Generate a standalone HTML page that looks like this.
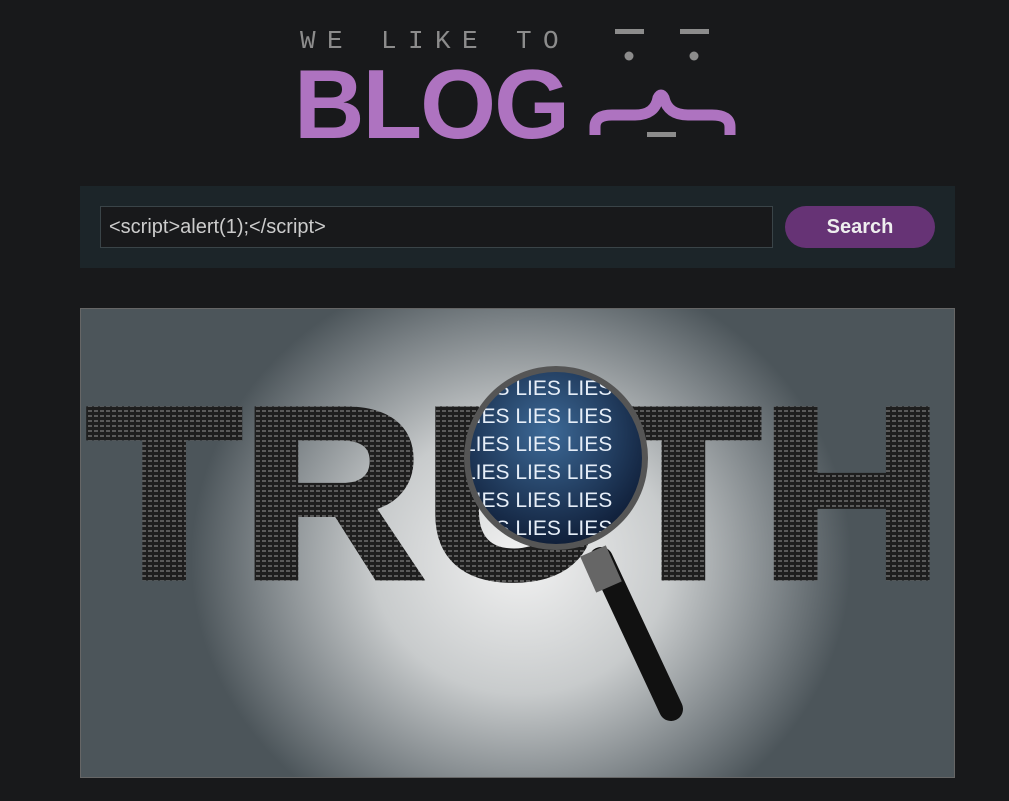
<!DOCTYPE html>
<html><head><meta charset="utf-8"><style>
html,body{margin:0;padding:0;background:#18191b;width:1009px;height:801px;overflow:hidden;font-family:"Liberation Sans",sans-serif}
.logo{position:absolute;left:0;top:0}
.bar{position:absolute;left:80px;top:186px;width:875px;height:82px;background:#1c2529}
.inp{position:absolute;left:20px;top:20px;width:673px;height:42px;background:#18191b;border:1px solid #3a4448;box-sizing:border-box;color:#ccc;font-size:20px;line-height:40px;padding-left:8px}
.btn{position:absolute;left:705px;top:20px;width:150px;height:42px;border-radius:21px;background:#663375;color:#eee;font-weight:bold;font-size:20px;text-align:center;line-height:42px}
.img{position:absolute;left:80px;top:308px;width:875px;height:470px;border:1px solid #666;box-sizing:border-box;overflow:hidden;background:radial-gradient(ellipse 330px 300px at 440px 250px,#f2f2f2 0%,#c8cbcc 45%,#7a8185 80%,#4c555a 100%)}
</style></head><body>
<svg class="logo" width="1009" height="160">
<text x="300" y="48" font-family="Liberation Mono" font-size="26" fill="#8c8c8c" letter-spacing="11.4">WE LIKE TO</text>
<text x="294" y="138" font-family="Liberation Sans" font-weight="bold" font-size="98" fill="#ae73c0" letter-spacing="-2" textLength="274" lengthAdjust="spacingAndGlyphs">BLOG</text>
<rect x="615" y="29" width="29" height="5" fill="#8c8c8c"/><rect x="680" y="29" width="29" height="5" fill="#8c8c8c"/>
<circle cx="629" cy="56" r="4.5" fill="#8c8c8c"/><circle cx="694" cy="56" r="4.5" fill="#8c8c8c"/>
<rect x="647" y="132" width="29" height="5" fill="#8c8c8c"/>
<path d="M595 135 V127 Q595 115 612 115 H635 Q655 115 658 98 Q661 92 664 98 Q668 115 688 115 H712 Q730 115 730 127 V135" fill="none" stroke="#ae73c0" stroke-width="11"/>
</svg>
<div class="bar"><div class="inp">&lt;script&gt;alert(1);&lt;/script&gt;</div><div class="btn">Search</div></div>
<div class="img">
<svg width="875" height="470">
<defs>
<pattern id="p" width="6" height="5" patternUnits="userSpaceOnUse"><rect width="6" height="5" fill="#1e1e1e"/><rect x="1" y="1" width="4" height="2" fill="#5a5a5a"/></pattern>
<radialGradient id="lg" cx="0.45" cy="0.35" r="0.7"><stop offset="0" stop-color="#3d6a98"/><stop offset="1" stop-color="#0d1a33"/></radialGradient>
<clipPath id="c"><circle cx="475" cy="149" r="86"/></clipPath>
</defs>
<text x="6" y="268" font-family="Liberation Sans" font-weight="bold" font-size="243" fill="url(#p)" stroke="url(#p)" stroke-width="7" textLength="856" lengthAdjust="spacingAndGlyphs">TRUTH</text>
<line x1="520" y1="250" x2="590" y2="400" stroke="#111" stroke-width="24" stroke-linecap="round"/>
<line x1="512" y1="242" x2="528" y2="278" stroke="#666" stroke-width="28"/>
<circle cx="475" cy="149" r="92" fill="#555"/>
<circle cx="475" cy="149" r="86" fill="url(#lg)"/>
<g clip-path="url(#c)" font-family="Liberation Sans" font-size="21" fill="#e6eef8">
<text x="383" y="86">LIES LIES LIES</text><text x="383" y="114">LIES LIES LIES</text><text x="383" y="142">LIES LIES LIES</text><text x="383" y="170">LIES LIES LIES</text><text x="383" y="198">LIES LIES LIES</text><text x="383" y="226">LIES LIES LIES</text>
</g>
</svg>
</div>
</body></html>
